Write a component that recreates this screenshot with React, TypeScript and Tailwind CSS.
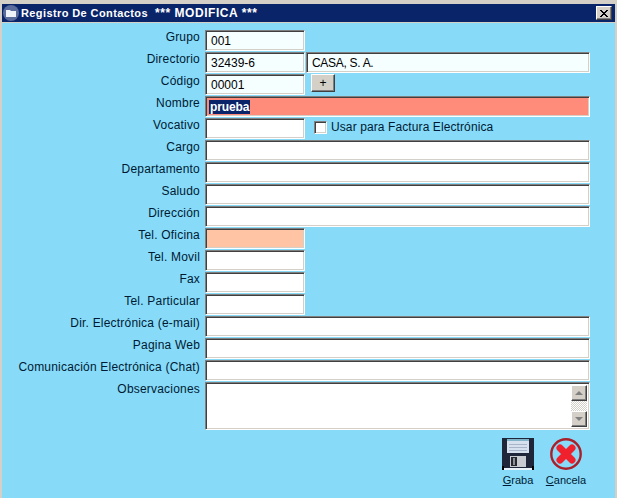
import React from "react";

const bevel =
  "border border-t-[#808080] border-l-[#808080] border-r-white border-b-white shadow-[inset_1px_1px_0_#404040,inset_-1px_-1px_0_#d4d0c8]";
const field = `h-[21px] ${bevel} text-[12px] leading-[17px] pl-[5px] pt-[2px] overflow-hidden whitespace-nowrap text-black`;
const short = "w-[100px]";
const long = "w-[385px]";
const raised =
  "bg-[#d4d0c8] border border-t-white border-l-white border-r-[#404040] border-b-[#404040] shadow-[inset_-1px_-1px_0_#808080]";

function Label({ children }: { children: React.ReactNode }) {
  return (
    <div className="w-[198px] shrink-0 text-right text-[12px] leading-[14px] tracking-[0.2px] text-[#001a33]">
      {children}
    </div>
  );
}

function Row({ label, children }: { label?: string; children?: React.ReactNode }) {
  return (
    <div className="flex h-[22px] items-start">
      <Label>{label}</Label>
      <div className="ml-[5px] flex items-start">{children}</div>
    </div>
  );
}

function Save() {
  return (
    <svg width="32" height="32" viewBox="0 0 32 32" shapeRendering="crispEdges">
      <rect x="0" y="0" width="32" height="30" fill="#20263a" />
      <rect x="0" y="28" width="2" height="4" fill="#000" />
      <rect x="30" y="28" width="2" height="4" fill="#000" />
      <rect x="2" y="30" width="28" height="2" fill="#e8f4fa" />
      <rect x="5" y="1" width="22" height="14" fill="#d6e0ee" />
      <rect x="5" y="1" width="22" height="2" fill="#7fb4c8" />
      <rect x="7" y="6" width="18" height="1" fill="#a8b4c8" />
      <rect x="7" y="9" width="18" height="1" fill="#a8b4c8" />
      <rect x="7" y="12" width="18" height="1" fill="#a8b4c8" />
      <rect x="8" y="18" width="16" height="11" fill="#c8ccd0" />
      <rect x="9" y="19" width="6" height="9" fill="#26282e" />
      <rect x="11" y="20" width="2" height="7" fill="#8a8f98" />
    </svg>
  );
}

function Cancel() {
  return (
    <svg width="32" height="32" viewBox="0 0 32 32">
      <circle cx="16" cy="16" r="14.7" fill="#87dbf9" stroke="#a8202a" strokeWidth="2.4" />
      <path d="M10 10 L22 22 M22 10 L10 22" stroke="#f0202c" strokeWidth="7" strokeLinecap="round" />
    </svg>
  );
}

export default function App() {
  return (
    <div
      className="w-[617px] h-[498px] bg-[#d4d0c8] pl-[2px] pr-[2px] pt-[4px] flex flex-col overflow-hidden"
      style={{ fontFamily: '"Liberation Sans", Arial, sans-serif' }}
    >
      <div className="h-[18px] shrink-0 bg-[#0a246a] flex items-center pl-px pr-[3px] text-white font-bold whitespace-pre">
        <svg width="16" height="16" viewBox="0 0 16 16" className="mr-[2px]">
          <circle cx="8" cy="8" r="8" fill="#5a6c9c" />
          <path d="M3 5h4l1 1h5v6H3z" fill="#eef2fa" />
        </svg>
        <span className="text-[11px] tracking-[0.4px]">Registro De Contactos</span>
        <span className="ml-[7px] text-[12px] tracking-[0.55px]">*** MODIFICA ***</span>
        <div className={`ml-auto w-[16px] h-[14px] flex items-center justify-center ${raised}`}>
          <svg width="8" height="7" viewBox="0 0 8 7" shapeRendering="crispEdges">
            <path d="M0 0L8 7M8 0L0 7" stroke="#000" strokeWidth="1.5" />
          </svg>
        </div>
      </div>

      <div className="flex-1 bg-[#87dbf9] mt-px pt-[7px] flex flex-col">
        <Row label="Grupo"><div className={`${field} ${short} bg-[#f5ffff]`}>001</div></Row>
        <Row label="Directorio">
          <div className={`${field} ${short} bg-[#f5ffff]`}>32439-6</div>
          <div className={`${field} w-[284px] ml-px bg-[#f5ffff] tracking-[-0.3px]`}>CASA, S. A.</div>
        </Row>
        <Row label="Código">
          <div className={`${field} ${short} bg-[#f5ffff]`}>00001</div>
          <button className={`ml-[6px] w-[24px] h-[18px] text-[12px] leading-[13px] text-black ${raised}`}>+</button>
        </Row>
        <Row label="Nombre">
          <div className={`${field} ${long} bg-[#ff8c7a] !pl-[3px]`}>
            <span className="bg-[#0a246a] text-white font-bold text-[12px] tracking-[-0.1px] px-px">prueba</span>
          </div>
        </Row>
        <Row label="Vocativo">
          <div className={`${field} ${short} bg-white`} />
          <div className="ml-[9px] mt-[2px] flex items-center">
            <div className={`w-[13px] h-[13px] bg-white ${bevel}`} />
            <span className="ml-[4px] text-[12px] leading-[14px] tracking-[0.1px] text-[#001a33]">Usar para Factura Electrónica</span>
          </div>
        </Row>
        <Row label="Cargo"><div className={`${field} ${long} bg-white`} /></Row>
        <Row label="Departamento"><div className={`${field} ${long} bg-white`} /></Row>
        <Row label="Saludo"><div className={`${field} ${long} bg-white`} /></Row>
        <Row label="Dirección"><div className={`${field} ${long} bg-white`} /></Row>
        <Row label="Tel. Oficina"><div className={`${field} ${short} bg-[#ffc4a4]`} /></Row>
        <Row label="Tel. Movil"><div className={`${field} ${short} bg-white`} /></Row>
        <Row label="Fax"><div className={`${field} ${short} bg-white`} /></Row>
        <Row label="Tel. Particular"><div className={`${field} ${short} bg-white`} /></Row>
        <Row label="Dir. Electrónica (e-mail)"><div className={`${field} ${long} bg-white`} /></Row>
        <Row label="Pagina Web"><div className={`${field} ${long} bg-white`} /></Row>
        <Row label="Comunicación Electrónica (Chat)"><div className={`${field} ${long} bg-white`} /></Row>
        <div className="flex h-[48px] items-start">
          <Label>Observaciones</Label>
          <div className={`ml-[5px] h-[48px] w-[385px] p-[2px] bg-white flex justify-end ${bevel}`}>
            <div className="w-[16px] flex flex-col bg-[repeating-conic-gradient(#d4d0c8_0_25%,#ffffff_0_50%)] bg-[length:2px_2px]">
              <div className={`h-[16px] flex items-center justify-center ${raised}`}>
                <div className="w-0 h-0 border-x-[4px] border-x-transparent border-b-[4px] border-b-[#808080]" />
              </div>
              <div className="flex-1" />
              <div className={`h-[16px] flex items-center justify-center ${raised}`}>
                <div className="w-0 h-0 border-x-[4px] border-x-transparent border-t-[4px] border-t-[#808080]" />
              </div>
            </div>
          </div>
        </div>
        <div className="flex justify-end pr-[33px] mt-[8px] gap-[16px]">
          <div className="flex flex-col items-center w-[32px]">
            <Save />
            <span className="text-[11px] leading-[13px] mt-[4px] text-[#001a33]"><u>G</u>raba</span>
          </div>
          <div className="flex flex-col items-center w-[32px]">
            <Cancel />
            <span className="text-[11px] leading-[13px] mt-[4px] text-[#001a33] whitespace-nowrap"><u>C</u>ancela</span>
          </div>
        </div>
      </div>
    </div>
  );
}
